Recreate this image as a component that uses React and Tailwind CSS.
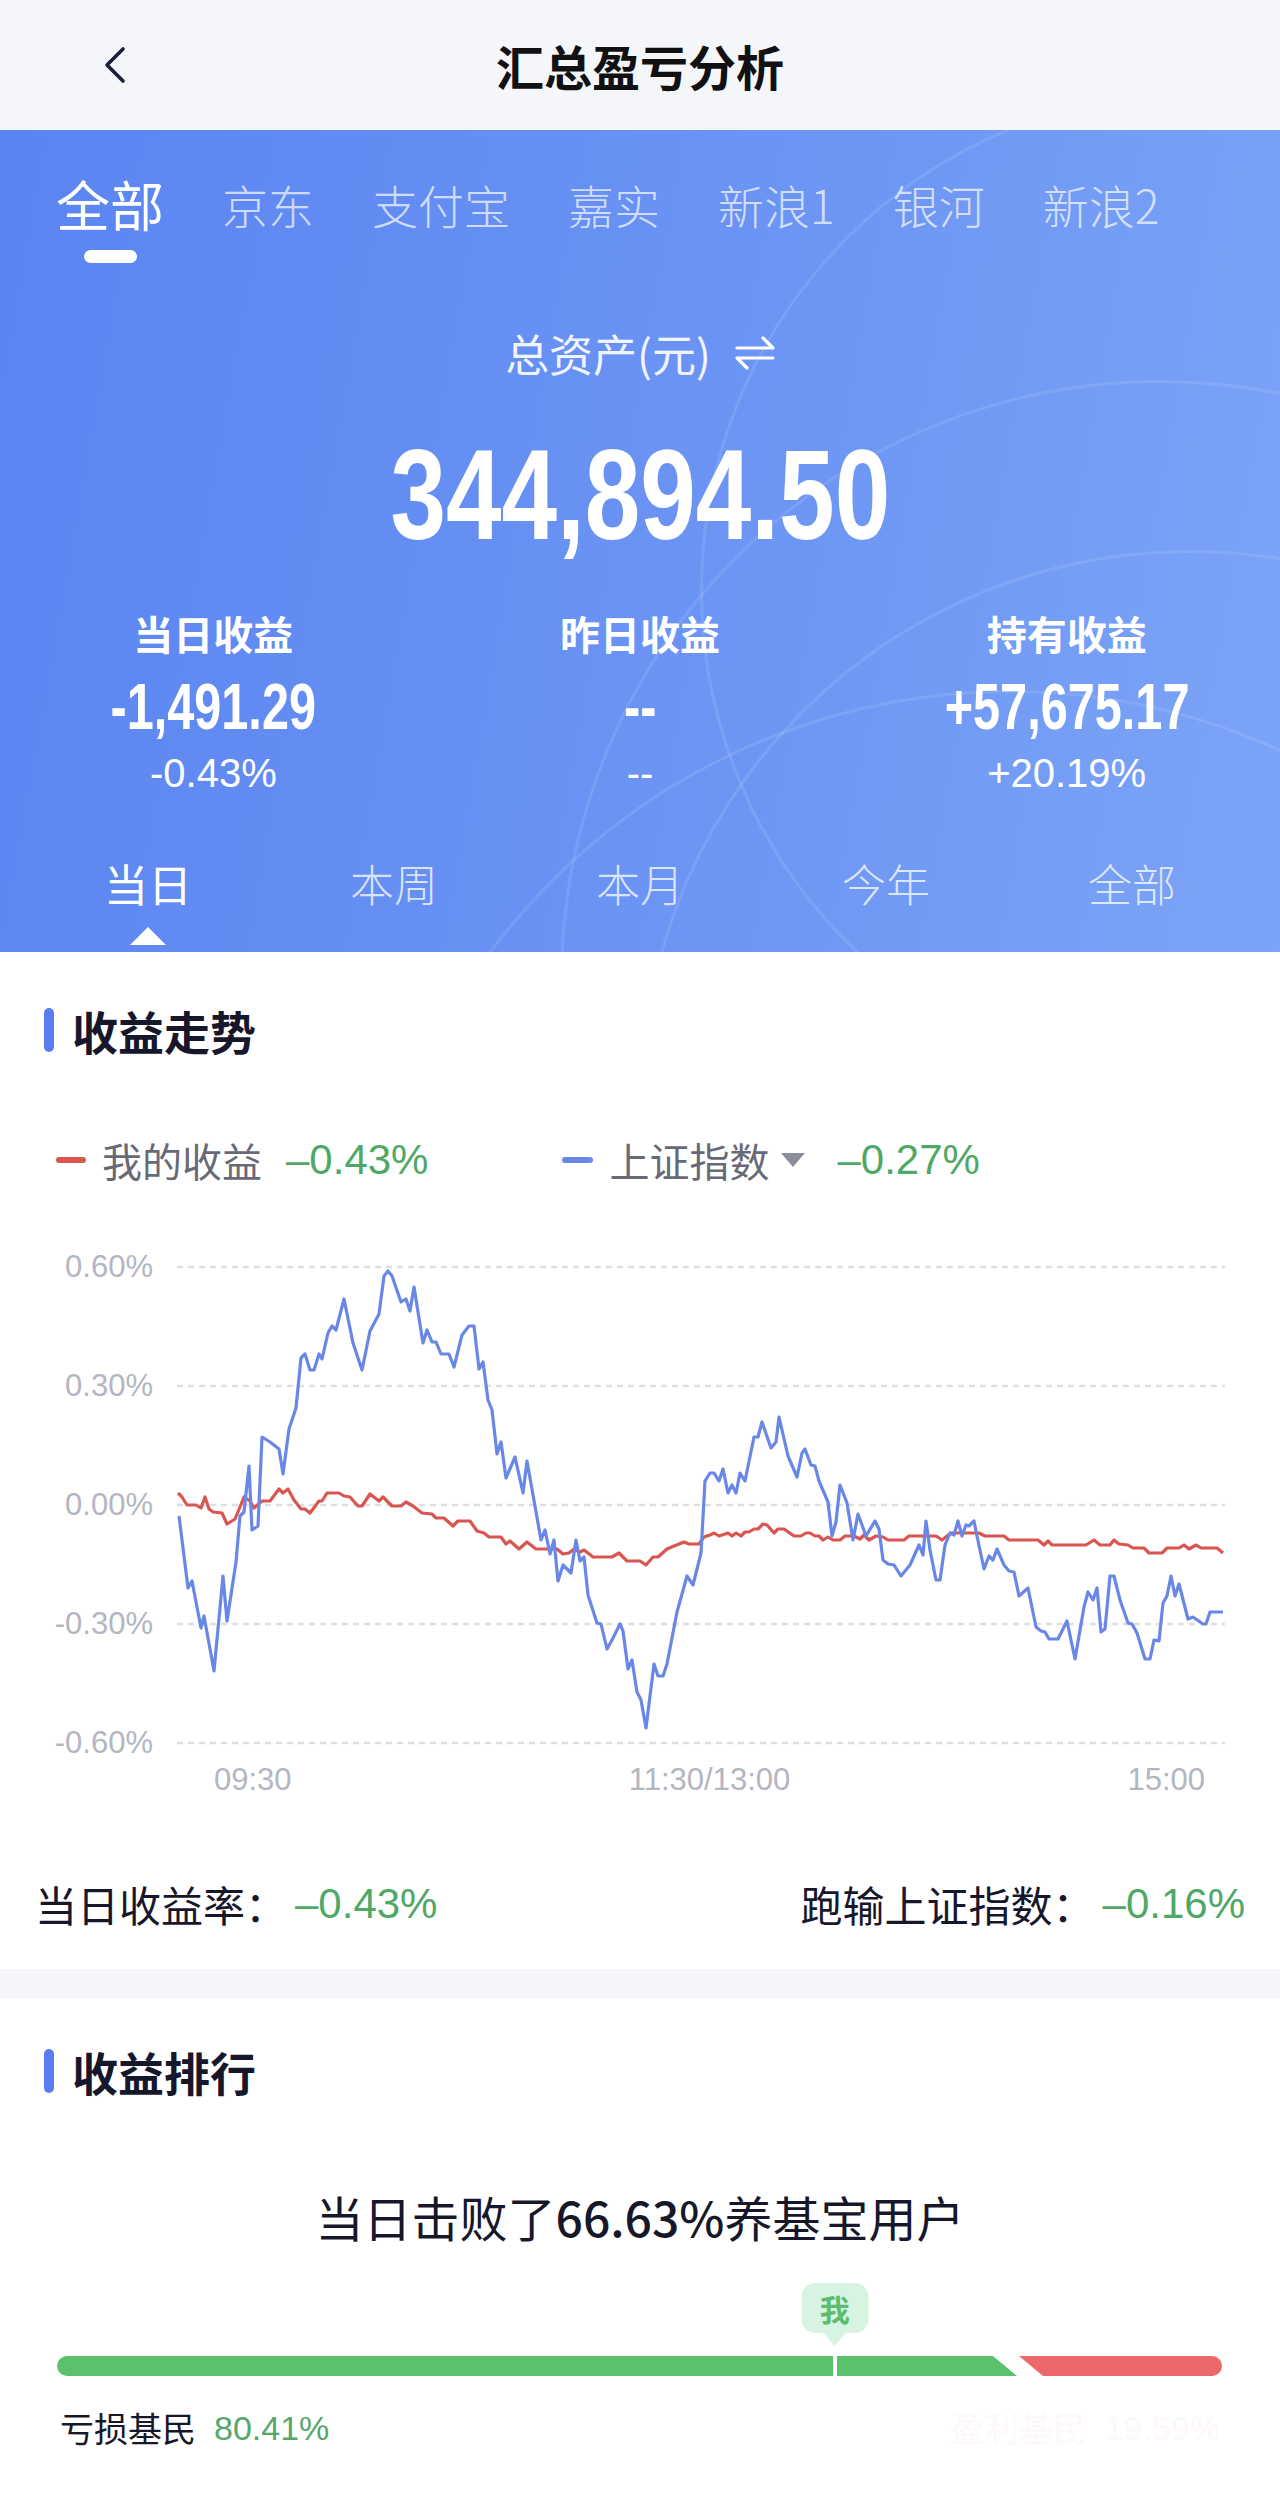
import { useState } from 'react';

const cjk = "font-['Noto_Sans_CJK_SC','Noto_Sans',sans-serif]";
const num = "font-['Liberation_Sans','Noto_Sans_CJK_SC',sans-serif]";

const ACCOUNTS = ['全部', '京东', '支付宝', '嘉实', '新浪1', '银河', '新浪2'];
const PERIODS = ['当日', '本周', '本月', '今年', '全部'];

// page-space points (x, y) — the svg viewBox is placed at the same coordinates
const BLUE = [
  [179, 1516], [188, 1588], [192, 1581], [201, 1628], [204, 1616], [214, 1671], [223, 1576], [227, 1621],
  [236, 1562], [240, 1516], [244, 1512], [249, 1466], [252, 1530], [258, 1526], [262, 1437], [270, 1442],
  [279, 1449], [283, 1474], [289, 1429], [296, 1408], [301, 1358], [305, 1354], [310, 1370], [314, 1370],
  [319, 1354], [322, 1359], [328, 1333], [332, 1326], [336, 1330], [344, 1299], [353, 1343], [362, 1370],
  [370, 1331], [379, 1314], [384, 1276], [388, 1271], [392, 1276], [401, 1302], [406, 1299], [410, 1311],
  [414, 1287], [423, 1343], [427, 1330], [432, 1342], [436, 1342], [441, 1354], [449, 1354], [454, 1367],
  [462, 1335], [469, 1326], [474, 1326], [479, 1369], [483, 1362], [488, 1400], [492, 1410], [497, 1454],
  [501, 1442], [506, 1478], [515, 1457], [523, 1493], [527, 1461], [541, 1540], [545, 1530], [550, 1554],
  [554, 1540], [558, 1581], [563, 1565], [571, 1573], [576, 1540], [580, 1561], [584, 1557], [588, 1595],
  [597, 1623], [601, 1624], [607, 1649], [612, 1640], [620, 1624], [623, 1631], [628, 1669], [632, 1660],
  [637, 1692], [641, 1700], [646, 1728], [654, 1664], [658, 1676], [663, 1676], [667, 1664], [677, 1612],
  [687, 1576], [693, 1585], [701, 1553], [705, 1481], [710, 1473], [714, 1473], [719, 1481], [723, 1469],
  [728, 1493], [732, 1485], [736, 1493], [740, 1473], [745, 1481], [754, 1437], [758, 1437], [762, 1422],
  [771, 1448], [776, 1442], [779, 1417], [788, 1456], [797, 1477], [802, 1453], [805, 1449], [811, 1465],
  [815, 1466], [819, 1481], [828, 1502], [832, 1536], [836, 1522], [840, 1485], [847, 1503], [853, 1540],
  [858, 1514], [866, 1536], [875, 1521], [879, 1529], [883, 1560], [888, 1564], [894, 1565], [901, 1576],
  [910, 1565], [919, 1545], [923, 1555], [926, 1521], [930, 1550], [936, 1580], [940, 1580], [945, 1545],
  [950, 1533], [954, 1535], [958, 1521], [962, 1536], [966, 1525], [969, 1526], [974, 1521], [977, 1536],
  [984, 1569], [989, 1556], [993, 1560], [997, 1549], [1004, 1565], [1009, 1571], [1014, 1572], [1019, 1596],
  [1028, 1588], [1036, 1627], [1041, 1631], [1045, 1632], [1049, 1639], [1058, 1639], [1067, 1621],
  [1075, 1659], [1084, 1607], [1088, 1592], [1093, 1600], [1097, 1588], [1101, 1632], [1105, 1629],
  [1110, 1576], [1114, 1576], [1120, 1600], [1128, 1623], [1132, 1624], [1137, 1633], [1145, 1659],
  [1150, 1659], [1154, 1640], [1159, 1641], [1163, 1603], [1167, 1596], [1171, 1576], [1175, 1596],
  [1179, 1584], [1188, 1619], [1193, 1617], [1203, 1624], [1206, 1624], [1210, 1612], [1223, 1612],
];

const RED = [
  [178, 1493], [182, 1497], [187, 1505], [196, 1505], [201, 1508], [205, 1497], [209, 1509], [213, 1512],
  [222, 1513], [227, 1524], [235, 1519], [240, 1507], [244, 1497], [250, 1501], [254, 1508], [262, 1501],
  [270, 1501], [279, 1489], [283, 1493], [288, 1489], [294, 1500], [301, 1509], [305, 1509], [310, 1513],
  [319, 1501], [322, 1501], [327, 1493], [339, 1493], [344, 1496], [350, 1497], [358, 1506], [362, 1506],
  [370, 1494], [379, 1501], [383, 1497], [392, 1506], [401, 1506], [406, 1502], [413, 1506], [422, 1513],
  [432, 1514], [436, 1518], [444, 1518], [453, 1526], [458, 1521], [470, 1521], [477, 1531], [484, 1533],
  [489, 1537], [501, 1537], [506, 1544], [510, 1541], [519, 1549], [527, 1542], [536, 1549], [557, 1549],
  [563, 1554], [569, 1553], [574, 1549], [580, 1552], [584, 1550], [593, 1557], [612, 1557], [619, 1553],
  [627, 1561], [640, 1561], [646, 1565], [653, 1557], [658, 1557], [667, 1549], [674, 1546], [679, 1544],
  [684, 1542], [689, 1544], [699, 1544], [704, 1537], [710, 1535], [714, 1533], [719, 1536], [728, 1533],
  [732, 1536], [736, 1533], [741, 1536], [745, 1532], [749, 1532], [754, 1529], [758, 1529], [763, 1524],
  [767, 1525], [774, 1533], [778, 1529], [784, 1529], [794, 1536], [801, 1536], [806, 1533], [810, 1533],
  [815, 1536], [819, 1536], [823, 1540], [828, 1537], [833, 1540], [840, 1540], [845, 1536], [854, 1536],
  [860, 1539], [864, 1535], [869, 1540], [876, 1536], [883, 1537], [888, 1540], [904, 1540], [909, 1536],
  [936, 1536], [942, 1540], [947, 1536], [951, 1533], [979, 1533], [985, 1536], [1004, 1536], [1009, 1540],
  [1038, 1540], [1044, 1545], [1048, 1541], [1052, 1545], [1086, 1545], [1094, 1540], [1100, 1545],
  [1110, 1545], [1114, 1540], [1119, 1544], [1128, 1545], [1133, 1548], [1144, 1548], [1149, 1553],
  [1162, 1553], [1167, 1548], [1179, 1548], [1184, 1545], [1189, 1549], [1196, 1545], [1201, 1548],
  [1217, 1548], [1223, 1553],
];

const GRID_Y = [1267, 1386, 1505, 1624, 1743];
const Y_LABELS = ['0.60%', '0.30%', '0.00%', '-0.30%', '-0.60%'];

const pts = (arr) => arr.map((p) => p.join(',')).join(' ');

function SectionTitle({ children }) {
  return (
    <div className="flex items-center gap-[18px] pl-[44px]">
      <div className="w-[10px] h-[44px] rounded-full bg-[#5b7cf0]" />
      <span className="text-[46px] leading-[44px] font-bold text-[#17172b]">{children}</span>
    </div>
  );
}

function SwapIcon() {
  return (
    <svg width="40" height="36" viewBox="0 0 40 36" fill="none" stroke="white" strokeWidth="3.2" strokeLinecap="round" strokeLinejoin="round">
      <path d="M2 13 H38 L28 3" />
      <path d="M38 23 H2 L12 33" />
    </svg>
  );
}

function Chart() {
  return (
    <div className="flex mt-[73px]">
      <div className={`w-[153px] h-[506px] -my-[5px] flex flex-col justify-between items-end ${num}`}>
        {Y_LABELS.map((l) => (
          <span key={l} className="text-[31px] leading-[30px] text-[#b3b6c1]">{l}</span>
        ))}
      </div>
      <svg className="ml-[24px]" width="1048" height="496" viewBox="177 1257 1048 496">
        {GRID_Y.map((y) => (
          <line key={y} x1="177" x2="1225" y1={y} y2={y} stroke="#dcdee4" strokeWidth="2.5" strokeDasharray="6 5" />
        ))}
        <polyline points={pts(RED)} fill="none" stroke="#d95650" strokeWidth="3.2" strokeLinejoin="round" />
        <polyline points={pts(BLUE)} fill="none" stroke="#6987e6" strokeWidth="3.2" strokeLinejoin="round" />
      </svg>
    </div>
  );
}

function RankBar() {
  return (
    <div className="px-[57px] mt-[37px]">
      <div className="relative h-[93px]">
        <div className="absolute top-0 left-[66.7%] -translate-x-1/2 flex flex-col items-center">
          <div className="w-[67px] h-[50px] rounded-[14px] bg-[#d7f3e2] flex items-center justify-center text-[30px] font-bold text-[#5bbd70]">我</div>
          <div className="w-0 h-0 border-l-[11px] border-r-[11px] border-t-[13px] border-l-transparent border-r-transparent border-t-[#d7f3e2]" />
        </div>
        <svg className="absolute bottom-0 left-0" width="1166" height="20" viewBox="0 0 1166 20">
          <path d="M10 0 H936 L960 20 H10 A10 10 0 0 1 10 0 Z" fill="#5cc16d" />
          <rect x="776" y="0" width="4" height="20" fill="white" />
          <path d="M962 0 H1155 A10 10 0 0 1 1155 20 H986 Z" fill="#ec686b" />
        </svg>
      </div>
    </div>
  );
}

export default function App() {
  const [account, setAccount] = useState(0);
  const [period, setPeriod] = useState(0);

  return (
    <div className={`w-[1280px] bg-white ${cjk}`}>
      {/* nav bar */}
      <div className="h-[130px] bg-[#f5f6fa] grid grid-cols-[1fr_auto_1fr] items-center">
        <button className="pl-[104px] flex items-center">
          <svg width="22" height="38" viewBox="0 0 22 38" fill="none" stroke="#1e1e3a" strokeWidth="3.6" strokeLinecap="round" strokeLinejoin="round">
            <path d="M19 3 L3 19 L19 35" />
          </svg>
        </button>
        <h1 className="text-[48px] leading-[60px] font-bold text-[#111]">汇总盈亏分析</h1>
        <div />
      </div>

      {/* summary card */}
      <div className="relative h-[822px] overflow-hidden bg-[linear-gradient(100deg,#5a84f1_0%,#6b94f4_55%,#7ca4f6_100%)] text-white">
        <div className="absolute left-[560px] top-[250px] w-[1200px] h-[1200px] rounded-full border-[3px] border-white/10" />
        <div className="absolute left-[640px] top-[420px] w-[1100px] h-[1100px] rounded-full border-[3px] border-white/10" />
        <div className="absolute left-[700px] top-[-40px] w-[1000px] h-[1000px] rounded-full border-[3px] border-white/10" />
        <div className="absolute left-[360px] top-[560px] w-[1300px] h-[1300px] rounded-full border-[3px] border-white/10" />

        <div className="relative">
          <div className="pt-[44px] pl-[56px] flex items-start gap-[58px]">
            {ACCOUNTS.map((a, i) => (
              <button key={a} onClick={() => setAccount(i)} className="flex flex-col items-center">
                <span className={i === account ? 'text-[54px] leading-[60px] text-white' : 'text-[46px] leading-[60px] text-white/70 font-light'}>{a}</span>
                {i === account && <span className="mt-[16px] w-[53px] h-[13px] rounded-full bg-white" />}
              </button>
            ))}
          </div>

          <div className="mt-[65px] h-[50px] flex items-center justify-center gap-[24px]">
            <span className="text-[44px] leading-[50px] text-white/90">总资产(元)</span>
            <SwapIcon />
          </div>

          <div className="mt-[52px] text-center">
            <span className={`inline-block scale-x-[0.78] text-[128px] leading-[130px] font-bold ${num}`}>344,894.50</span>
          </div>

          <div className="mt-[48px] grid grid-cols-3">
            {[
              ['当日收益', '-1,491.29', '-0.43%'],
              ['昨日收益', '--', '--'],
              ['持有收益', '+57,675.17', '+20.19%'],
            ].map(([label, val, pct]) => (
              <div key={label} className="flex flex-col items-center">
                <span className="text-[40px] leading-[50px] font-bold">{label}</span>
                <span className={`mt-[19px] inline-block scale-x-[0.76] text-[64px] leading-[60px] font-bold ${num}`}>{val}</span>
                <span className={`mt-[12px] text-[40px] leading-[48px] ${num}`}>{pct}</span>
              </div>
            ))}
          </div>

          <div className="mt-[58px] px-[25px] grid grid-cols-5">
            {PERIODS.map((p, i) => (
              <button key={p} onClick={() => setPeriod(i)} className="flex flex-col items-center">
                <span className={`text-[44px] leading-[56px] ${i === period ? 'text-white' : 'text-white/75 font-light'}`}>{p}</span>
                <span className={`mt-[16px] w-0 h-0 border-l-[18px] border-r-[18px] border-b-[18px] border-l-transparent border-r-transparent ${i === period ? 'border-b-white' : 'border-b-transparent'}`} />
              </button>
            ))}
          </div>
        </div>
      </div>

      {/* trend */}
      <div className="pt-[56px] pb-[40px]">
        <SectionTitle>收益走势</SectionTitle>

        <div className="mt-[84px] pl-[56px] flex items-center h-[48px] text-[40px] leading-[48px]">
          <span className="w-[30px] h-[6px] rounded-full bg-[#d95650]" />
          <span className="ml-[16px] text-[#676a76]">我的收益</span>
          <span className={`ml-[24px] text-[42px] text-[#4fa865] ${num}`}>–0.43%</span>
          <span className="ml-[134px] w-[31px] h-[6px] rounded-full bg-[#6987e6]" />
          <span className="ml-[16px] text-[#676a76]">上证指数</span>
          <svg className="ml-[10px]" width="28" height="18" viewBox="0 0 28 18">
            <path d="M2 2 H26 L14 16 Z" fill="#8b8e9a" strokeLinejoin="round" />
          </svg>
          <span className={`ml-[30px] text-[42px] text-[#4fa865] ${num}`}>–0.27%</span>
        </div>

        <Chart />

        <div className={`mt-[9px] ml-[177px] w-[1048px] pl-[37px] pr-[20px] flex justify-between text-[31px] leading-[36px] text-[#b3b6c1] ${num}`}>
          <span>09:30</span>
          <span>11:30/13:00</span>
          <span>15:00</span>
        </div>

        <div className="mt-[81px] px-[35px] flex justify-between items-center text-[42px] leading-[50px] text-[#17172b]">
          <div className="flex items-center">
            <span>当日收益率：</span>
            <span className={`ml-[8px] text-[#4fa865] ${num}`}>–0.43%</span>
          </div>
          <div className="flex items-center">
            <span>跑输上证指数：</span>
            <span className={`ml-[8px] text-[#4fa865] ${num}`}>–0.16%</span>
          </div>
        </div>
      </div>

      <div className="h-[29px] bg-[#f5f6fa]" />

      {/* ranking */}
      <div className="pt-[51px] pb-[43px]">
        <SectionTitle>收益排行</SectionTitle>
        <div className="mt-[93px] text-center text-[48px] leading-[60px] text-[#17172b]">
          当日击败了<span className="font-medium">66.63%</span>养基宝用户
        </div>
        <RankBar />
        <div className="mt-[30px] px-[60px] flex justify-between items-center text-[34px] leading-[44px]">
          <div className="flex items-center">
            <span className="text-[#17172b]">亏损基民</span>
            <span className={`ml-[18px] text-[#55a76a] text-[34px] ${num}`}>80.41%</span>
          </div>
          <div className="flex items-center text-[#fef8f8]">
            <span>盈利基民</span>
            <span className={`ml-[18px] text-[34px] ${num}`}>19.59%</span>
          </div>
        </div>
      </div>
    </div>
  );
}
